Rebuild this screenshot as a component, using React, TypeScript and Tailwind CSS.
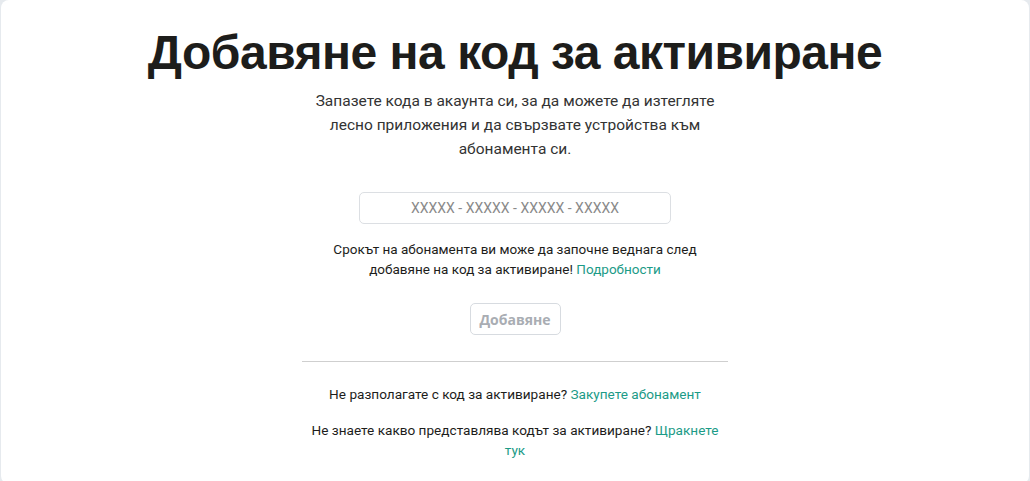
export default function App() {
  return (
    <div className="min-h-screen bg-[#e6eaee] font-['Roboto',sans-serif] text-[#1d1d1b]">
      <div className="mx-px min-h-[481px] rounded-lg bg-white pt-[25px] pb-6">
        <h1 className="text-center font-['Liberation_Sans',Arial,sans-serif] text-[48px] leading-[56px] font-bold tracking-[-0.5px] text-[#1d1d1b]">
          Добавяне на код за активиране
        </h1>
        <p className="mx-auto mt-[8px] max-w-[420px] text-center text-[15.5px] leading-[24px] text-[#333]">
          Запазете кода в акаунта си, за да можете да изтегляте лесно приложения и да свързвате устройства към абонамента си.
        </p>
        <div className="mx-auto mt-[31px] flex w-[426px] flex-col items-center">
          <input
            className="h-[32px] w-[312px] rounded-[5px] border border-[#dcdfe3] text-center text-[14px] text-[#333] placeholder:text-[#8a8a8a] outline-none"
            placeholder="XXXXX - XXXXX - XXXXX - XXXXX"
          />
          <p className="mt-[15px] text-center text-[13.5px] leading-[20px] text-[#1d1d1b]">
            Срокът на абонамента ви може да започне веднага след
            <br />
            добавяне на код за активиране! <a className="text-[#1c9b87]">Подробности</a>
          </p>
          <button className="mt-[24px] h-[32px] w-[91px] rounded-[5px] border border-[#d7dbe0] font-['Open_Sans',sans-serif] text-[14px] font-bold text-[#a9adb3]">
            Добавяне
          </button>
          <div className="mt-[26px] h-px w-full bg-[#cfcfcf]" />
          <p className="mt-[22px] text-center text-[13.6px] leading-[20px]">
            Не разполагате с код за активиране? <a className="text-[#1c9b87]">Закупете абонамент</a>
          </p>
          <p className="mt-[16px] text-center text-[13.6px] leading-[20px]">
            Не знаете какво представлява кодът за активиране? <a className="text-[#1c9b87]">Щракнете тук</a>
          </p>
        </div>
      </div>
    </div>
  );
}
